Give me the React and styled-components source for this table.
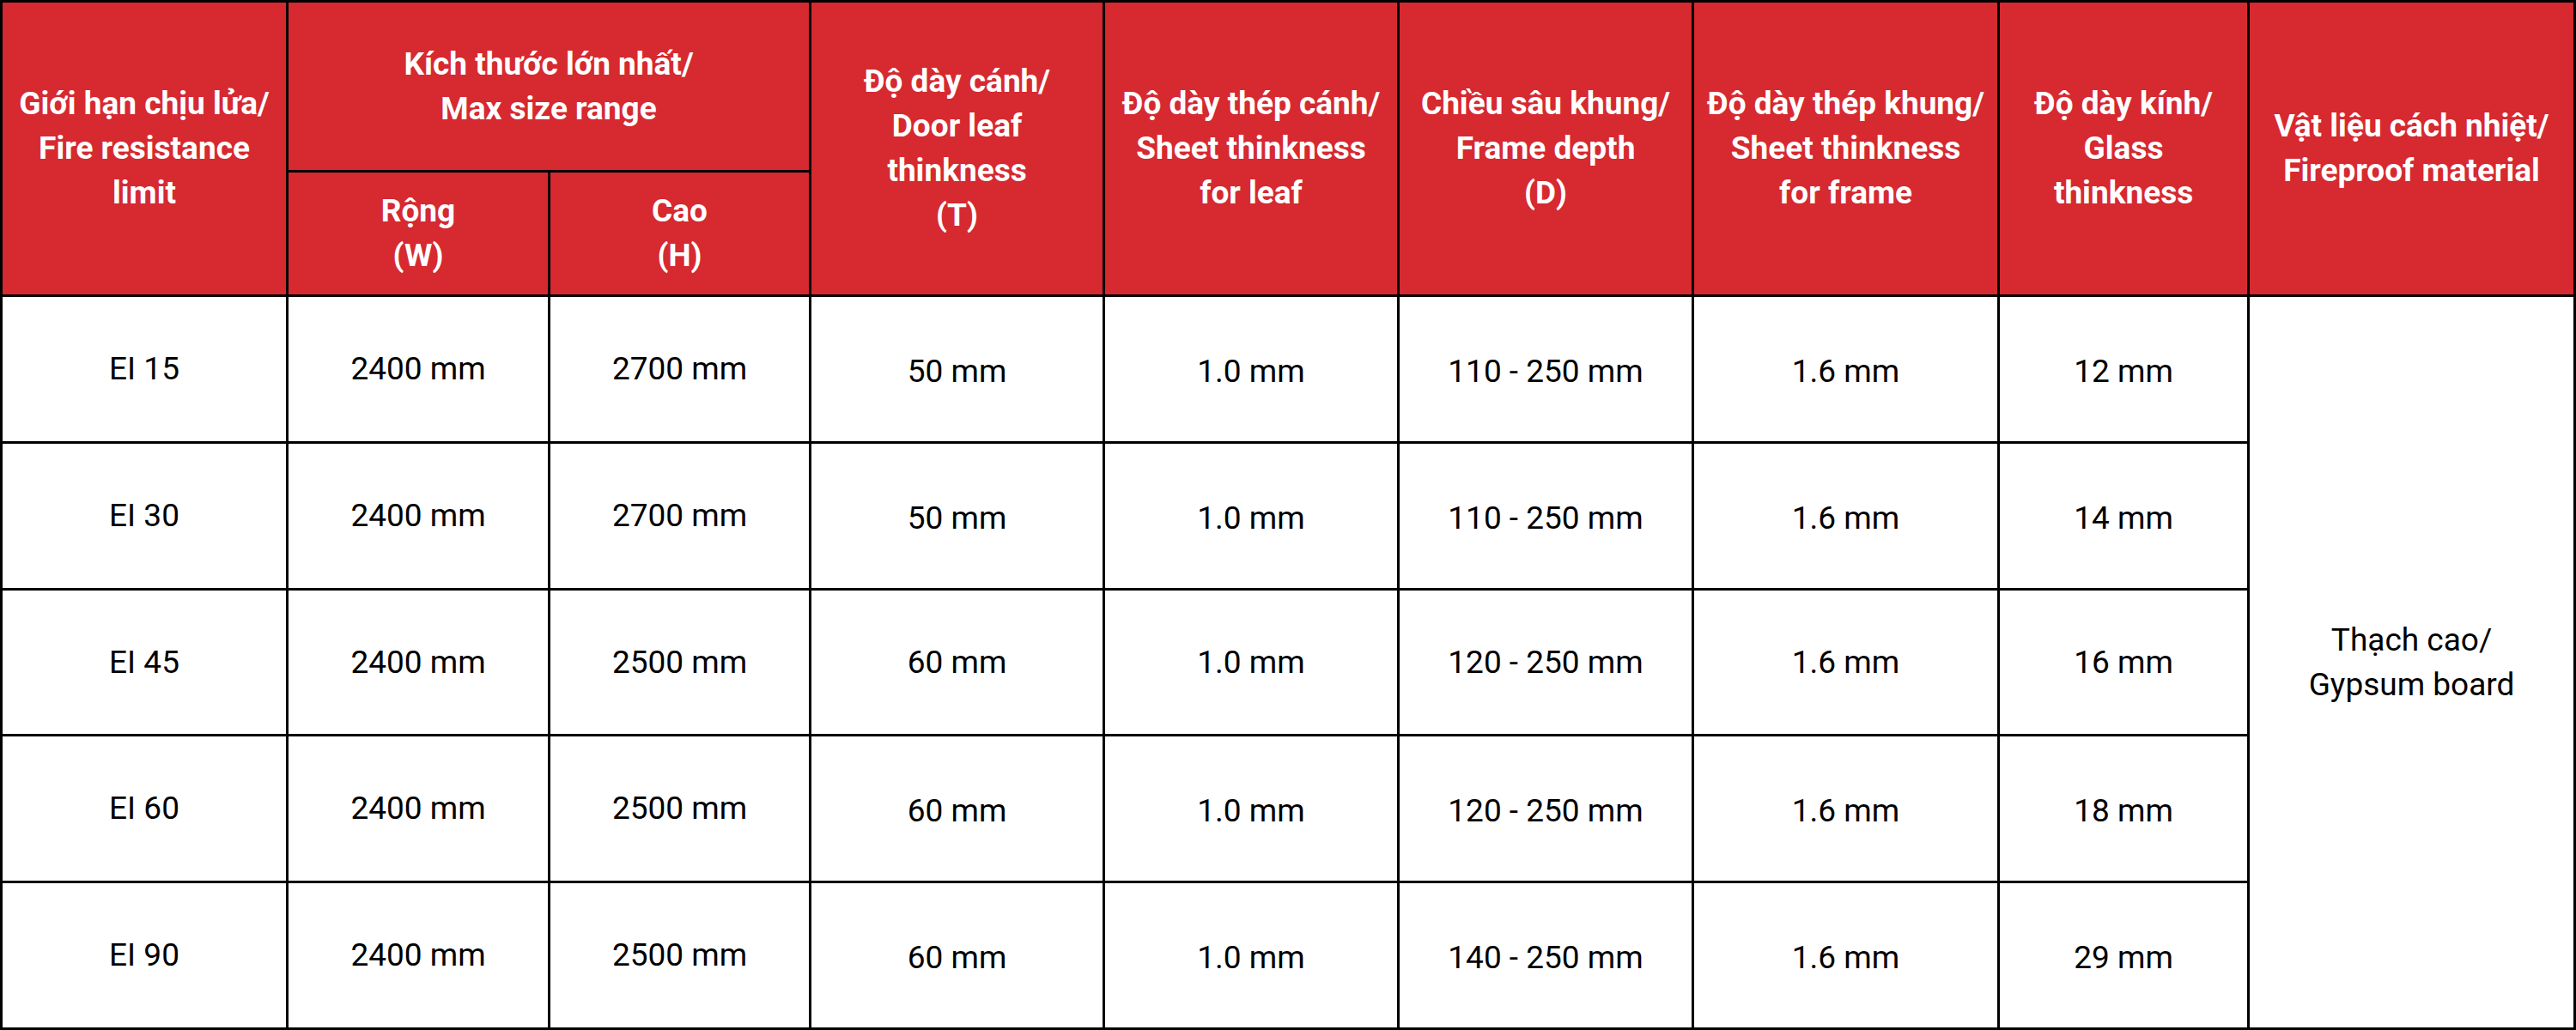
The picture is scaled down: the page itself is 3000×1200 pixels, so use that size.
import React from "react";
import styled, { createGlobalStyle } from "styled-components";

const Global = createGlobalStyle`
  html, body { margin: 0; padding: 0; background: #ffffff; }
  body { font-family: "Roboto", "Liberation Sans", sans-serif; }
`;

const Table = styled.table`
  width: 3000px;
  table-layout: fixed;
  border-collapse: separate;
  border-spacing: 0;
  border-top: 3px solid #000;
  border-left: 3px solid #000;
  font-family: "Roboto", "Liberation Sans", sans-serif;
`;

const Row = styled.tr`
  height: ${(p) => p.$h}px;
`;

const HeadCell = styled.th`
  background: #d62930;
  color: #ffffff;
  font-size: 37px;
  font-weight: 700;
  line-height: 52px;
  text-align: center;
  vertical-align: middle;
  padding: 0;
  white-space: nowrap;
  border-right: 3px solid #000;
  border-bottom: 3px solid #000;
`;

const Cell = styled.td`
  background: #ffffff;
  color: #000;
  font-size: 37px;
  font-weight: 400;
  line-height: 52px;
  text-align: center;
  vertical-align: middle;
  padding: ${(p) => (p.$low ? "5px 0 0" : "0")};
  white-space: nowrap;
  border-right: 3px solid #000;
  border-bottom: 3px solid #000;
`;

const widths = [333, 305, 304, 342, 343, 343, 356, 291, 380];

const rows = [
  ["EI 15", "2400 mm", "2700 mm", "50 mm", "1.0 mm", "110 - 250 mm", "1.6 mm", "12 mm"],
  ["EI 30", "2400 mm", "2700 mm", "50 mm", "1.0 mm", "110 - 250 mm", "1.6 mm", "14 mm"],
  ["EI 45", "2400 mm", "2500 mm", "60 mm", "1.0 mm", "120 - 250 mm", "1.6 mm", "16 mm"],
  ["EI 60", "2400 mm", "2500 mm", "60 mm", "1.0 mm", "120 - 250 mm", "1.6 mm", "18 mm"],
  ["EI 90", "2400 mm", "2500 mm", "60 mm", "1.0 mm", "140 - 250 mm", "1.6 mm", "29 mm"],
];
const rowHeights = [171, 171, 170, 171, 171];

const Lines = ({ lines }) =>
  lines.map((l, i) => (
    <React.Fragment key={i}>
      {i > 0 && <br />}
      {l}
    </React.Fragment>
  ));

export default function App() {
  return (
    <>
      <Global />
      <Table>
        <colgroup>
          {widths.map((w, i) => (
            <col key={i} style={{ width: w }} />
          ))}
        </colgroup>
        <thead>
          <Row $h={198}>
            <HeadCell rowSpan={2}>
              <Lines lines={["Giới hạn chịu lửa/", "Fire resistance", "limit"]} />
            </HeadCell>
            <HeadCell colSpan={2}>
              <Lines lines={["Kích thước lớn nhất/", "Max size range"]} />
            </HeadCell>
            <HeadCell rowSpan={2}>
              <Lines lines={["Độ dày cánh/", "Door leaf", "thinkness", "(T)"]} />
            </HeadCell>
            <HeadCell rowSpan={2}>
              <Lines lines={["Độ dày thép cánh/", "Sheet thinkness", "for leaf"]} />
            </HeadCell>
            <HeadCell rowSpan={2}>
              <Lines lines={["Chiều sâu khung/", "Frame depth", "(D)"]} />
            </HeadCell>
            <HeadCell rowSpan={2}>
              <Lines lines={["Độ dày thép khung/", "Sheet thinkness", "for frame"]} />
            </HeadCell>
            <HeadCell rowSpan={2}>
              <Lines lines={["Độ dày kính/", "Glass", "thinkness"]} />
            </HeadCell>
            <HeadCell rowSpan={2}>
              <Lines lines={["Vật liệu cách nhiệt/", "Fireproof material"]} />
            </HeadCell>
          </Row>
          <Row $h={145}>
            <HeadCell>
              <Lines lines={["Rộng", "(W)"]} />
            </HeadCell>
            <HeadCell>
              <Lines lines={["Cao", "(H)"]} />
            </HeadCell>
          </Row>
        </thead>
        <tbody>
          {rows.map((r, i) => (
            <Row key={i} $h={rowHeights[i]}>
              {r.map((c, j) => (
                <Cell key={j} $low={j >= 3 && i !== 2}>
                  {c}
                </Cell>
              ))}
              {i === 0 && (
                <Cell rowSpan={5}>
                  <Lines lines={["Thạch cao/", "Gypsum board"]} />
                </Cell>
              )}
            </Row>
          ))}
        </tbody>
      </Table>
    </>
  );
}
